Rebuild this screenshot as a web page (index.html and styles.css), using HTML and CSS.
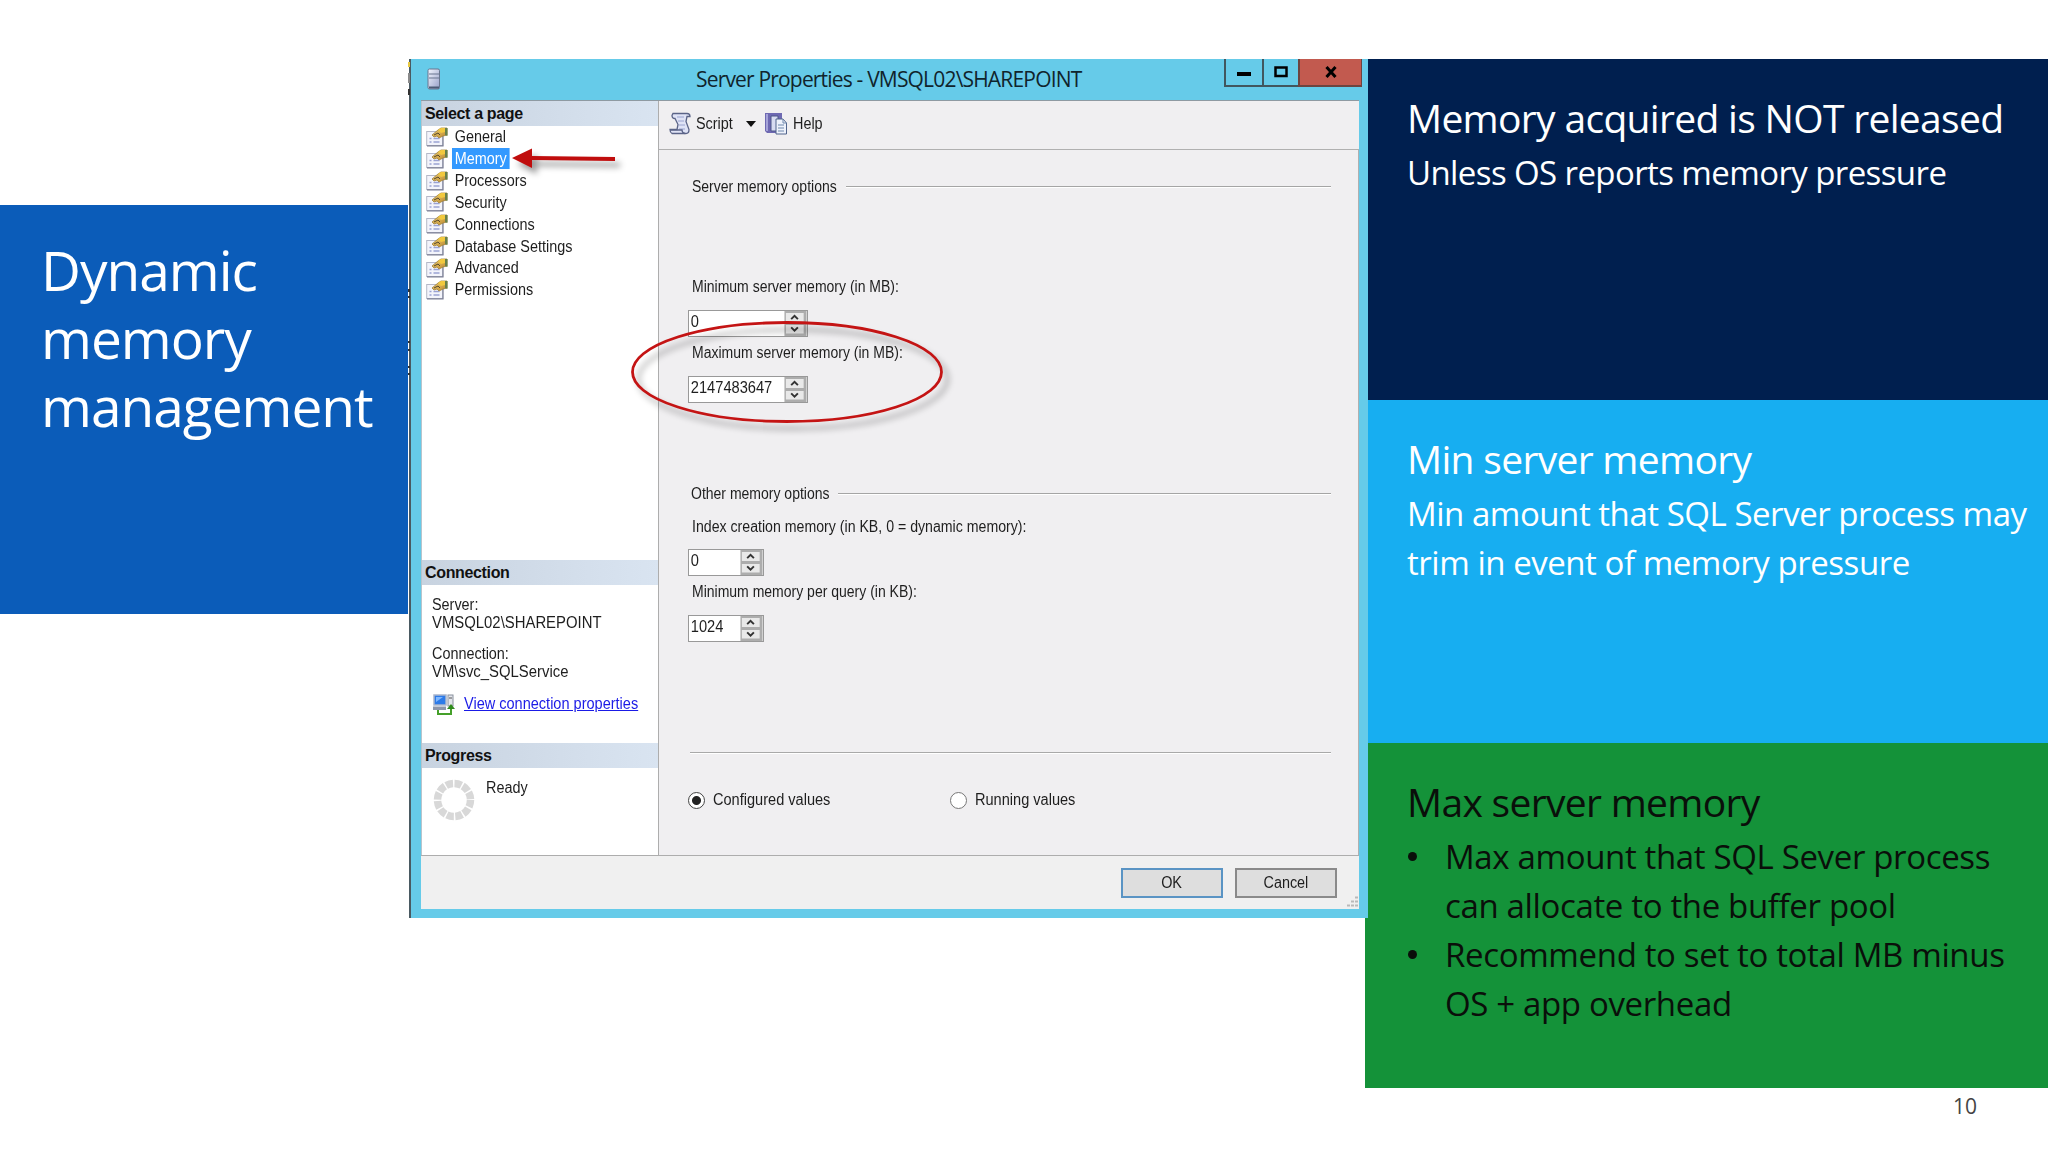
FILE: index.html
```html
<!doctype html>
<html>
<head>
<meta charset="utf-8">
<title>Dynamic memory management</title>
<link rel="stylesheet" href="styles.css">
</head>

<body>
<svg width="0" height="0" class="defs">
	<defs>
		<linearGradient id="gold" x1="0" y1="0" x2="1" y2="1"><stop offset="0" stop-color="#f5d67a"/><stop offset="1" stop-color="#b8842a"/></linearGradient>
		<linearGradient id="steel" x1="0" y1="0" x2="1" y2="1"><stop offset="0" stop-color="#f4f6ff"/><stop offset="1" stop-color="#98a0c8"/></linearGradient>
	</defs>
	<symbol id="prop" viewBox="0 0 22 20">
		<rect x=".7" y="4.500" width="16" height="14" fill="#f3f4fb" stroke="#b5b8c8"/>
		<path d="M1 18.800h16V8" fill="none" stroke="#7d8095" stroke-width="1.200"/>
		<path d="M3.500 11.500h2m2 0h6M3.500 15h2m2 0h6" stroke="#9aa2d4" stroke-width="1.500"/>
		<path d="M6 8l6-5 3-2h6v7l-4 1-4 2-2-2-3 1z" fill="url(#gold)" stroke="#a08038" stroke-width=".8"/>
		<path d="M12 3l3-2h5l-1 4-4 1z" fill="#f2c93e"/>
		<path d="M19 1h2.500v8l-2.500-1z" fill="#66804a"/>
		<path d="M8 8l4-2 2 2" fill="none" stroke="#55472c"/>
	</symbol>
	<symbol id="spin" viewBox="0 0 23 26">
		<rect width="23" height="26" fill="#adadad"/>
		<path d="M1.500 2h18.500v9.500h-18.500zM1.500 14.500h18.500v9h-18.500z" fill="#e9e9e9"/>
		<path d="M7 8.500l3.500-3.500 3.500 3.500M7 17l3.500 3.500 3.500-3.500" fill="none" stroke="#333" stroke-width="2"/>
	</symbol>
</svg>

<div class="slide">
	<div class="title">Dynamic<br>memory<br>management</div>

	<div class="window">
		<div class="titlebar">
			<svg class="srv" width="14" height="22" viewBox="0 0 14 22"><rect x="1" y="1" width="11.500" height="20" rx="1.500" fill="url(#steel)" stroke="#68758f"/><path d="M2 6h10M2 10h10" stroke="#68758f"/><path d="M2 19.500h10" stroke="#4d5a75" stroke-width="2"/></svg>
			<span class="caption">Server Properties - VMSQL02\SHAREPOINT</span>
			<div class="ctrls">
				<span class="ctrl min"><svg width="14" height="14"><path d="M0 9h14" stroke="#000" stroke-width="4"/></svg></span>
				<span class="ctrl max"><svg width="14" height="12"><rect x="1.500" y="1.500" width="11" height="8.500" fill="none" stroke="#000" stroke-width="2.500"/></svg></span>
				<span class="ctrl close"><svg width="12" height="12"><path d="M1.500 1l9 10M10.500 1l-9 10" stroke="#000" stroke-width="3"/></svg></span>
			</div>
		</div>

		<div class="client">
			<div class="side">
				<div class="band">Select a page</div>
				<ul class="pages">
					<li><svg><use href="#prop"/></svg><span class="t">General</span></li>
					<li class="cur"><svg><use href="#prop"/></svg><span class="t">Memory</span></li>
					<li><svg><use href="#prop"/></svg><span class="t">Processors</span></li>
					<li><svg><use href="#prop"/></svg><span class="t">Security</span></li>
					<li><svg><use href="#prop"/></svg><span class="t">Connections</span></li>
					<li><svg><use href="#prop"/></svg><span class="t">Database Settings</span></li>
					<li><svg><use href="#prop"/></svg><span class="t">Advanced</span></li>
					<li><svg><use href="#prop"/></svg><span class="t">Permissions</span></li>
				</ul>
				<div class="band">Connection</div>
				<div class="conn">
					<p><span class="t">Server:</span><br><span class="t caps">VMSQL02\SHAREPOINT</span></p>
					<p><span class="t">Connection:</span><br><span class="t caps">VM\svc_SQLService</span></p>
					<div class="view">
						<svg width="24" height="22" viewBox="0 0 24 22"><rect x="2" y="1" width="12" height="10" fill="#2d7be8" stroke="#a9b5cc" stroke-width="1.500"/><path d="M4 3h7L4 8z" fill="#7fb8ff"/><path d="M1 12.500h13v3.500H1z" fill="#8d97ab"/><rect x="16" y="1" width="5" height="11" fill="#e4e6ec" stroke="#888f9c"/><path d="M17 4h3" stroke="#555"/><path d="M6 16v4h13v-6" fill="none" stroke="#45a02a" stroke-width="2"/><path d="M15 15l4-5 4 5z" fill="#2f8a1c"/></svg>
						<span class="t link">View connection properties</span>
					</div>
				</div>
				<div class="band">Progress</div>
				<div class="progress">
					<svg width="42" height="42" viewBox="0 0 42 42"><circle cx="21" cy="21" r="16.500" fill="none" stroke="#d8d8d8" stroke-width="7.500" stroke-dasharray="7.140 1.500"/></svg>
					<span class="t">Ready</span>
				</div>
			</div>

			<div class="main">
				<div class="toolbar">
					<svg width="22" height="23" viewBox="0 0 22 23"><path d="M4 1.500h14q3 0 3 3h-3l-1 5 3 8q0 4-3 4H3q-2-1-2-4h7l1-5-3-6q-3 0-3-3z" fill="#dfe3f6" stroke="#5b6488" stroke-width="1.300"/><path d="M8 5h7M9 9h6M10 13h6M10 17h6" stroke="#9aa4d0"/><path d="M1 18h12q0 3 3 3.500" fill="none" stroke="#5b6488" stroke-width="1.300"/></svg>
					<span class="t script">Script</span>
					<svg class="drop" width="10" height="6"><path d="M0 0h10l-5 6z" fill="#111"/></svg>
					<svg width="22" height="23" viewBox="0 0 22 23"><path d="M0 1h17v18l-2 2H2l-2-2z" fill="#6e69b2"/><path d="M2 2v17" stroke="#a5a3d8" stroke-width="2"/><path d="M6 4h7v15H6z" fill="#d8dcf1" stroke="#4d5688"/><path d="M11 7h7l3.500 4v11H11z" fill="#eef2fb" stroke="#50648c"/><path d="M18 7v4h3.500M13 13h6M13 16h6M13 19h6" fill="none" stroke="#6f88ad"/></svg>
					<span class="t help">Help</span>
				</div>
				<div class="form">
					<div class="group g1"><span class="t">Server memory options</span><i></i></div>
					<div class="label l1"><span class="t">Minimum server memory (in MB):</span></div>
					<div class="num wide"><span class="t">0</span><svg><use href="#spin"/></svg></div>
					<div class="label"><span class="t">Maximum server memory (in MB):</span></div>
					<div class="num wide"><span class="t">2147483647</span><svg><use href="#spin"/></svg></div>
					<div class="group g2"><span class="t">Other memory options</span><i></i></div>
					<div class="label l3"><span class="t">Index creation memory (in KB, 0 = dynamic memory):</span></div>
					<div class="num"><span class="t">0</span><svg><use href="#spin"/></svg></div>
					<div class="label"><span class="t">Minimum memory per query (in KB):</span></div>
					<div class="num"><span class="t">1024</span><svg><use href="#spin"/></svg></div>
					<div class="rule"></div>
					<div class="radios">
						<label><b class="on"></b><span class="t">Configured values</span></label>
						<label><b></b><span class="t">Running values</span></label>
					</div>
				</div>
			</div>
		</div>

		<div class="footer">
			<div class="btn ok"><span class="t">OK</span></div>
			<div class="btn"><span class="t">Cancel</span></div>
			<svg class="grip" width="12" height="12"><path d="M8 1.500h3M4 5.500h3m1 0h3M0 9.500h3m1 0h3m1 0h3" stroke="#b9b9b9" stroke-width="2"/></svg>
		</div>

		<!-- red annotations over the dialog -->
		<svg class="arrow" width="124" height="40" viewBox="0 0 124 40"><path d="M2 14L22 4.500V12L105 13V17L22 16V24z" fill="#c00d0d"/></svg>
		<svg class="ring" width="330" height="120" viewBox="0 0 330 120"><ellipse cx="160" cy="55" rx="154.500" ry="49.500" fill="none" stroke="#c41414" stroke-width="2.800"/></svg>
		<!-- edge of the desktop behind the dialog -->
		<svg class="edge" width="2" height="320"><path d="M0 3h2v5H0z" fill="#e8c840"/><path d="M0 30h2v6H0zM0 230h2v3H0zM0 237h2v2H0zM0 282h2v2H0zM0 290h2v2H0zM0 307h2v2H0zM0 314h2v2H0z" fill="#333"/><path d="M0 14h2v10H0z" fill="#8a8a8a"/></svg>
	</div>

	<div class="panels">
		<div class="panel navy">
			<h2>Memory acquired is NOT released</h2>
			<p>Unless OS reports memory pressure</p>
		</div>
		<div class="panel sky">
			<h2>Min server memory</h2>
			<p>Min amount that SQL Server process may<br>trim in event of memory pressure</p>
		</div>
		<div class="panel green">
			<h2>Max server memory</h2>
			<ul>
				<li>Max amount that SQL Sever process<br>can allocate to the buffer pool</li>
				<li>Recommend to set to total MB minus<br>OS + app overhead</li>
			</ul>
		</div>
		<div class="pageno">10</div>
	</div>
</div>
</body>
</html>
```

FILE: styles.css
```css
*{margin:0;padding:0;list-style:none;box-sizing:border-box;}
body{background:#fff; overflow:hidden; font-family:"Open Sans","Noto Sans",sans-serif;}
svg{display:block; flex:none;}
.defs{position:absolute;}

.slide{display:grid; grid-template-columns:408px 957px 683px; width:2048px; height:1152px; padding-top:59px; align-items:start;}
.title{height:409px; margin-top:146px; padding:31px 0 0 41px; background:#0b5cb9; color:#fff; font-size:55px; line-height:68px; letter-spacing:-1px;}

/* dialog */
.window{position:relative; z-index:2; height:859px; margin:0 -3px 0 1px; padding:0 9px 9px 10px; background:#66cbe9; border-left:2px solid #4a5a62; font-family:"Liberation Sans",Arial,sans-serif; font-size:16px; color:#1e1e1e;}
.t{display:inline-block; white-space:nowrap; transform:scaleX(.9); transform-origin:0 50%;}
.titlebar{display:flex; height:41px; position:relative;}
.srv{margin:9px 0 0 6px;}
.caption{margin:5px 0 0 255px; font:21px/30px "Open Sans",sans-serif; letter-spacing:-.82px; white-space:nowrap; color:#10242c;}
.ctrls{display:flex; position:absolute; right:-3px; top:0; height:28px;}
.ctrl{display:flex; align-items:center; justify-content:center; border:1px solid #41565e; border-width:0 0 2px 2px;}
.min{width:38px;}
.max{width:36px;}
.close{width:64px; background:#c25a4f; border-color:#6d4440; border-right:1px solid #6d4440;}

.client{display:flex; height:756px; border-top:1px solid #8e9aa2; border-bottom:1px solid #adadad;}
.side{width:238px; background:#fff; border-right:1px solid #adadad; border-left:1px solid #b8c4cc;}
.band{height:25px; padding-left:3px; background:linear-gradient(90deg,#c8d3e0,#d9e4f1); font-weight:bold; font-size:16px; line-height:25px; letter-spacing:-.35px; color:#111;}
.pages{height:434px;}
.pages li{display:flex; align-items:center; height:21.850px; padding-left:4px;}
.pages svg{width:22px; height:20px; margin-right:4px;}
.pages .t{padding:0 3px; line-height:21px;}
.cur .t{background:#3399ff; color:#fff;}
.conn{height:158px; padding:11px 0 0 10px; line-height:17.500px;}
.conn p{margin-bottom:14px;}
.caps{transform:scaleX(.93);}
.view{display:flex;}
.link{margin:1px 0 0 8px; color:#1a1ae6; text-decoration:underline; transform:scaleX(.908);}
.progress{display:flex; padding:11px 0 0 11px;}
.progress .t{margin-left:11px;}

.main{flex:1; background:#f0eff1;}
.toolbar{display:flex; height:49px; padding:11px 0 0 10px; border-bottom:1px solid #b0b0b0;}
.toolbar .t{line-height:23px;}
.script{width:50px; margin-left:5px;}
.drop{margin:9px 9px 0 0;}
.help{margin-left:6px;}
.form{height:705px; padding:27px 0 0 29px; border-right:1px solid #b0b0b0;}
.group{display:flex; height:20px; align-items:center; padding-left:4px; margin-right:27px;}
.group i{flex:1; height:2px; margin-left:-11px; background:#a5a5a5; border-bottom:1px solid #fff;}
.group .t, .label .t{transform:scaleX(.875);}
.l1{margin-top:80px;}
.g2{margin-top:81px; padding-left:3px;}
.l3{margin-top:13px;}
.l3 .t{transform:scaleX(.884);}
.label{height:20px; line-height:20px; padding-left:4px;}
.num{display:flex; justify-content:space-between; width:76px; height:27px; margin:13px 0 6px; background:#fff; border:1px solid #999; line-height:22px;}
.num.wide{width:120px;}
.num .t{padding-left:2px; transform:scaleX(.915);}
.num svg{width:23px; height:25px;}
.l3 + .num{margin-top:12px;}
.rule{height:2px; margin:110px 27px 0 2px; background:#a9a9a9; border-bottom:1px solid #fff;}
.radios{display:flex; padding-top:36px;}
.radios label{display:flex; align-items:center; width:262px; height:20px;}
.radios b{display:block; width:17px; height:17px; margin-right:8px; border:1.500px solid #777; border-radius:50%; background:#fff;}
.radios .on{border-color:#444; background:radial-gradient(circle,#222 0,#222 4px,#fff 5px);}
.radios .t{transform:scaleX(.91);}

.footer{display:flex; justify-content:flex-end; position:relative; height:53px; padding:12px 22px 0 0; background:#f0f0f0;}
.btn{display:flex; align-items:center; justify-content:center; width:102px; height:30px; margin-left:12px; background:#dedede; border:2px solid #8a8a8a;}
.btn .t{transform-origin:50% 50%;}
.ok{border-color:#5a94c4;}
.grip{position:absolute; right:0; bottom:1px;}

.arrow{position:absolute; left:99px; top:85px; filter:drop-shadow(5px 6px 3px rgba(0,0,0,.4));}
.ring{position:absolute; left:216px; top:258px; filter:drop-shadow(6px 7px 3px rgba(0,0,0,.35));}
.edge{position:absolute; left:-3px; top:0;}

/* right column */
.panel{padding:34px 0 0 42px; white-space:nowrap; color:#fff;}
.navy{height:341px; background:#001f4f;}
.sky{height:343px; background:#17aef1;}
.green{height:345px; background:#149239; color:#0a0f0a;}
.panel h2{font-size:39px; font-weight:normal; line-height:50px; letter-spacing:-.68px;}
.panel p, .panel ul{padding-top:5px; font-size:33px; line-height:49px; letter-spacing:-.6px;}
.sky p{letter-spacing:-.46px;}
.green ul{letter-spacing:-.35px;}
.panel li{position:relative; padding-left:38px;}
.panel li:before{content:""; position:absolute; left:1px; top:20px; width:9px; height:9px; border-radius:50%; background:#0a0f0a;}
.pageno{padding:6px 0 0 588px; font-size:21px; line-height:24px; color:#444;}
```
